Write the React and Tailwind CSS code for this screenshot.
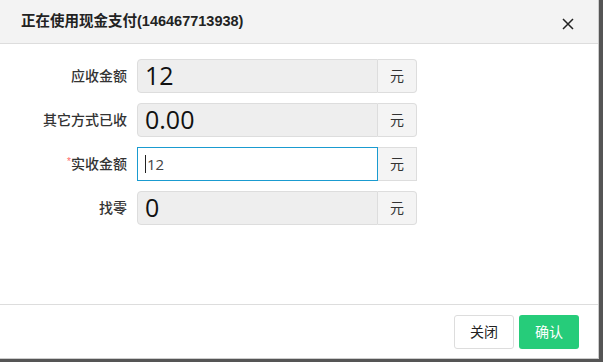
import React from 'react';

const rows = [
    { label: '应收金额', value: '12', readOnly: true },
    { label: '其它方式已收', value: '0.00', readOnly: true },
    { label: '实收金额', value: '12', readOnly: false, required: true },
    { label: '找零', value: '0', readOnly: true },
];

export default function App() {
    return (
        <div className="w-[603px] h-[362px] bg-[#555] overflow-hidden" style={{ fontFamily: '"Liberation Sans", "Noto Sans CJK SC", sans-serif' }}>
            <div className="w-[599px] h-[359px] bg-white border-r border-b border-[#ccc] flex flex-col">
                <div className="h-[44px] shrink-0 bg-[#f3f3f3] border-b border-[#ddd] flex items-center justify-between pl-[21px] pr-[24px]">
                    <h1 className="text-[14.5px] font-bold text-[#222] mt-[1px]">正在使用现金支付(146467713938)</h1>
                    <svg width="12" height="12" viewBox="0 0 12 12" className="mt-[4px]">
                        <path d="M1 1 L11 11 M11 1 L1 11" stroke="#222" strokeWidth="1.5" />
                    </svg>
                </div>

                <div className="h-[260px] shrink-0 pt-[15px] flex flex-col gap-[10px]">
                    {rows.map((r) => (
                        <div key={r.label} className="flex items-center">
                            <div className="w-[128px] text-right text-[14px] font-medium text-[#333] pr-[1px]">
                                {r.required && <span className="text-[#f66] text-[10px] align-top">*</span>}
                                {r.label}
                            </div>
                            <div className="ml-[9px] flex h-[34px] w-[280px]">
                                {r.readOnly ? (
                                    <div className="flex-1 bg-[#eee] border border-[#ddd] rounded-l-[4px] flex items-center pl-[7px] text-[25px] text-[#111]" style={{ fontFamily: '"Open Sans", sans-serif' }}>
                                        {r.value}
                                    </div>
                                ) : (
                                    <div className="flex-1 bg-white border border-[#1a9bd0] flex items-center pl-[7px] text-[15px] text-[#444]" style={{ fontFamily: '"Open Sans", sans-serif' }}>
                                        <span className="w-px h-[18px] bg-[#222] mr-[1px]"></span>
                                        {r.value}
                                    </div>
                                )}
                                <div className={`w-[39px] bg-[#f4f4f4] border border-l-0 border-[#ddd] flex items-center justify-center text-[14px] text-[#333] ${r.readOnly ? 'rounded-r-[4px]' : ''}`}>
                                    元
                                </div>
                            </div>
                        </div>
                    ))}
                </div>

                <div className="flex-1 border-t border-[#ddd] flex items-start justify-end gap-[5px] pt-[10px] pr-[19px]">
                    <button className="w-[60px] h-[34px] border border-[#ddd] rounded-[3px] bg-white text-[14px] text-[#222]">关闭</button>
                    <button className="w-[60px] h-[34px] rounded-[3px] bg-[#26cc7a] text-[14px] text-white">确认</button>
                </div>
            </div>
        </div>
    );
}
